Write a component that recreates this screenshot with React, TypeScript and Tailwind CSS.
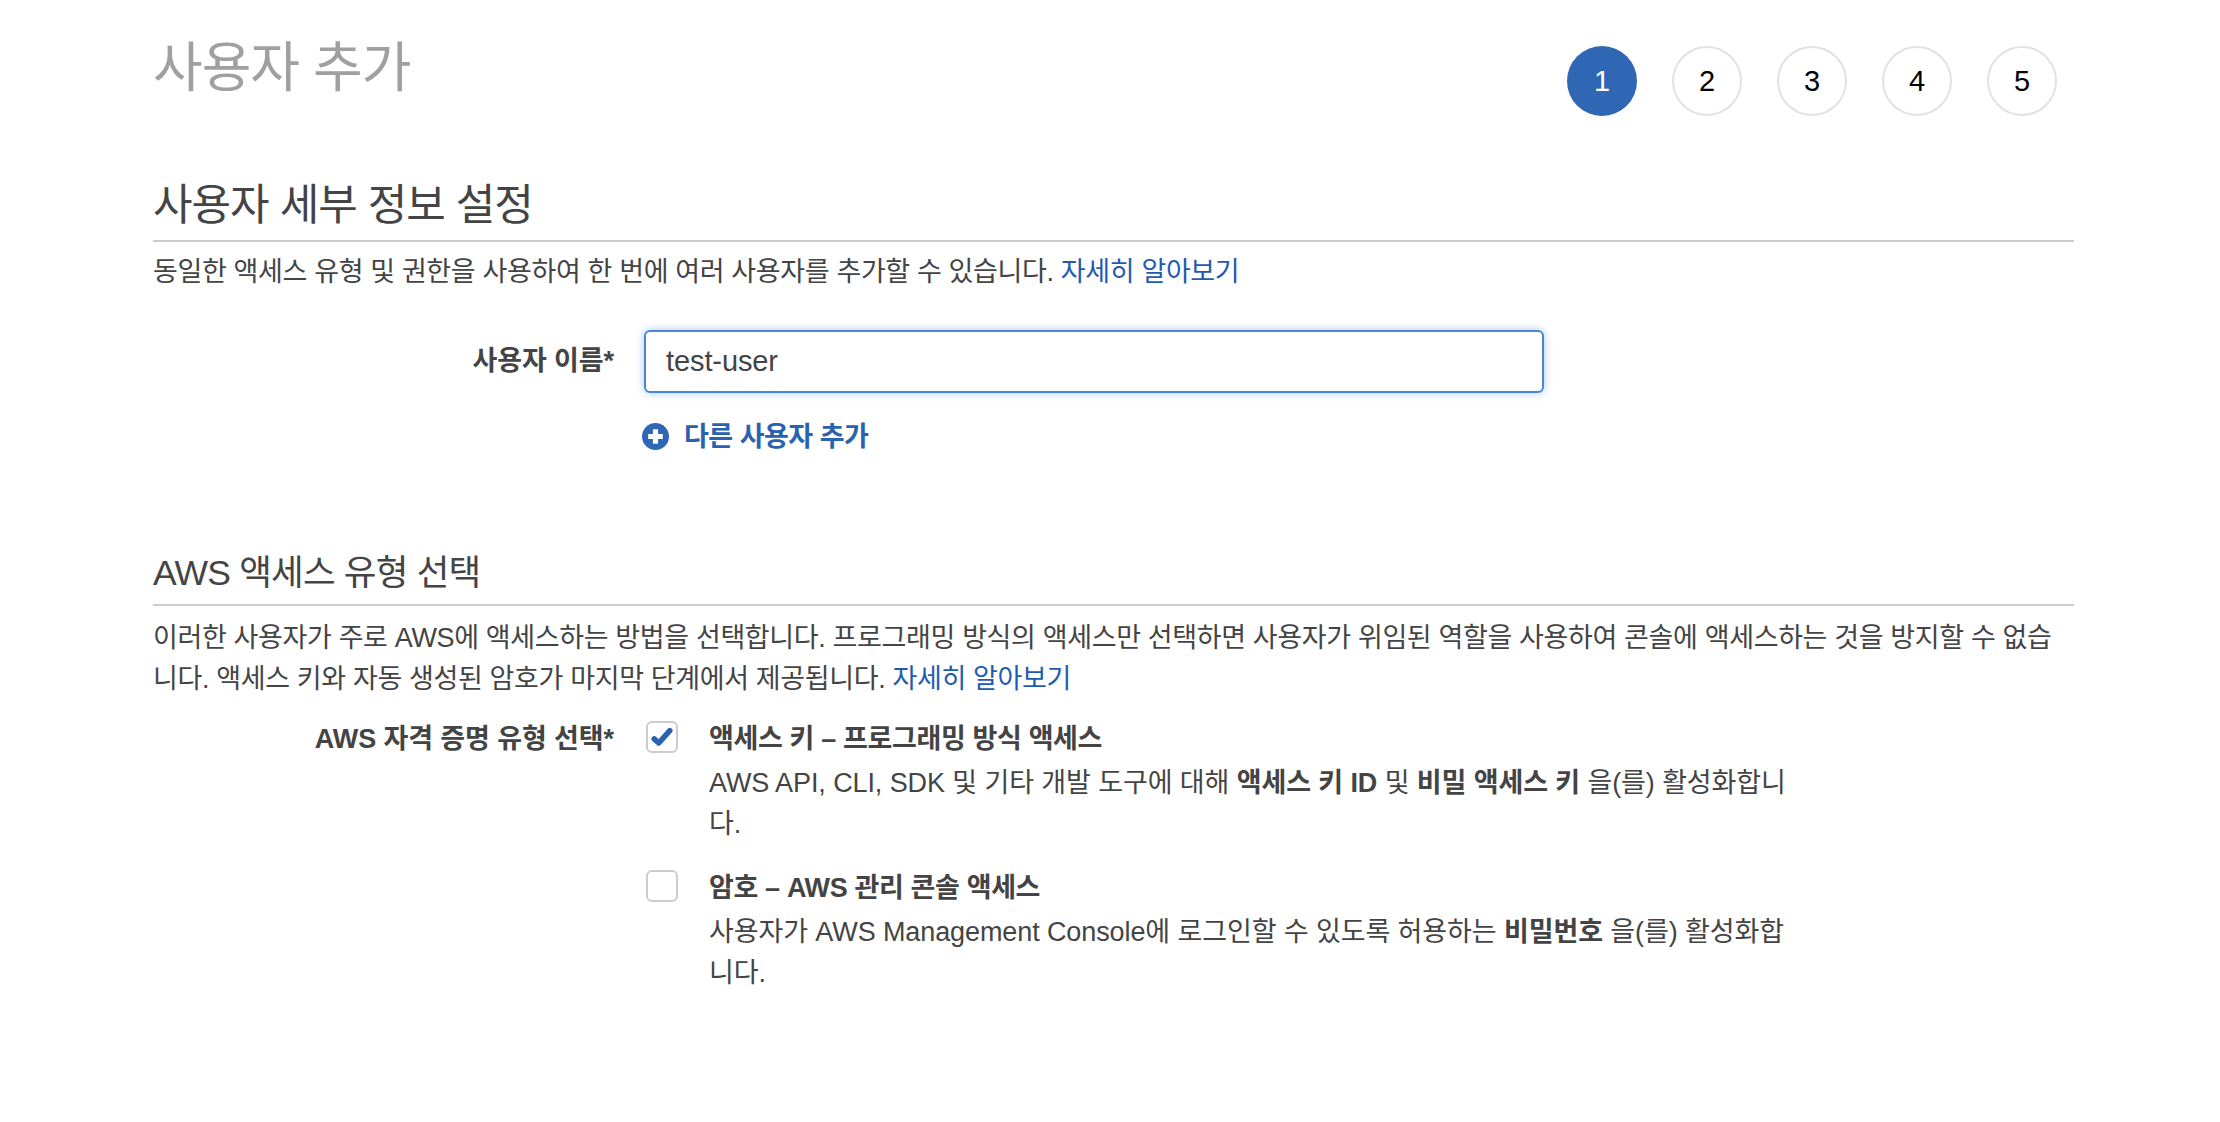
const KR = "font-['Liberation_Sans','Noto_Sans_CJK_KR',sans-serif]";

function Step({ n, active }: { n: number; active?: boolean }) {
  return (
    <div
      className={
        active
          ? "flex h-[70px] w-[70px] items-center justify-center rounded-full bg-[#3067b5] text-[29px] text-white"
          : "flex h-[70px] w-[70px] items-center justify-center rounded-full border-2 border-[#e2e2e2] bg-white text-[29px] text-black"
      }
    >
      {n}
    </div>
  );
}

function Link({ children }: { children: React.ReactNode }) {
  return <span className="text-[#1f5bb0]">{children}</span>;
}

export default function App() {
  return (
    <div className={`${KR} min-h-[1122px] bg-white pl-[153px] pr-[146px] text-[27px] leading-[41px] tracking-[-0.36px] text-[#444444]`}>
      <header className="flex items-start justify-between pt-[32px]">
        <h1 className="text-[54px] leading-[72px] tracking-[-1px] text-[#a0a0a0]">사용자 추가</h1>
        <div className="mr-[17px] mt-[14px] flex gap-[35px] tracking-normal">
          <Step n={1} active />
          <Step n={2} />
          <Step n={3} />
          <Step n={4} />
          <Step n={5} />
        </div>
      </header>

      <h2 className="mt-[63px] border-b-2 border-[#cccccc] pb-[8px] text-[43px] leading-[53px] tracking-[-1px]">사용자 세부 정보 설정</h2>
      <p className="mt-[10px]">
        동일한 액세스 유형 및 권한을 사용하여 한 번에 여러 사용자를 추가할 수 있습니다. <Link>자세히 알아보기</Link>
      </p>

      <div className="mt-[37px] flex items-center">
        <label className="w-[461px] text-right font-bold tracking-[-0.1px]">사용자 이름*</label>
        <input
          readOnly
          value="test-user"
          className="ml-[30px] h-[63px] w-[900px] rounded-[6px] border-2 border-[#4a86d8] bg-white px-[20px] text-[29px] tracking-[-0.1px] text-[#444444] shadow-[0_0_8px_rgba(74,134,216,0.45)] outline-none"
        />
      </div>

      <div className="ml-[489px] mt-[24px] flex items-center font-bold text-[#2a62b0]">
        <svg viewBox="0 0 24 24" className="-mt-[2px] h-[27px] w-[27px]" aria-hidden="true">
          <circle cx="12" cy="12" r="12" fill="#3067b5" />
          <path d="M12 5.5v13M5.5 12h13" stroke="#fff" strokeWidth="4.6" />
        </svg>
        <span className="ml-[15px] text-[27px] tracking-[-0.5px]">다른 사용자 추가</span>
      </div>

      <h3 className="mt-[92px] border-b-2 border-[#cccccc] pb-[7px] text-[35.5px] leading-[47px] tracking-[-0.8px]">AWS 액세스 유형 선택</h3>
      <p className="mt-[12px]">
        이러한 사용자가 주로 AWS에 액세스하는 방법을 선택합니다. 프로그래밍 방식의 액세스만 선택하면 사용자가 위임된 역할을 사용하여 콘솔에 액세스하는 것을 방지할 수 없습니다. 액세스 키와 자동 생성된 암호가 마지막 단계에서 제공됩니다. <Link>자세히 알아보기</Link>
      </p>

      <div className="mt-[19px] flex">
        <div className="w-[461px] text-right font-bold tracking-[-0.1px]">AWS 자격 증명 유형 선택*</div>
        <div className="ml-[32px] flex flex-col gap-[23px]">
          <div className="flex">
            <div className="mt-[2px] flex h-[32px] w-[32px] shrink-0 items-center justify-center rounded-[6px] border-2 border-[#cccccc] bg-white">
              <svg viewBox="0 0 24 24" className="h-[22px] w-[22px]" aria-hidden="true">
                <path d="M3.5 14l5 4.5L20.5 5" fill="none" stroke="#2a62b0" strokeWidth="6" strokeLinecap="round" strokeLinejoin="round" />
              </svg>
            </div>
            <div className="ml-[31px] w-[1085px]">
              <div className="font-bold">액세스 키 – 프로그래밍 방식 액세스</div>
              <div className="mt-[3px] tracking-[-0.1px]">
                AWS API, CLI, SDK 및 기타 개발 도구에 대해 <b>액세스 키 ID</b> 및 <b>비밀 액세스 키</b> 을(를) 활성화합니다.
              </div>
            </div>
          </div>
          <div className="flex">
            <div className="mt-[2px] h-[32px] w-[32px] shrink-0 rounded-[6px] border-2 border-[#cccccc] bg-white" />
            <div className="ml-[31px] w-[1085px]">
              <div className="font-bold">암호 – AWS 관리 콘솔 액세스</div>
              <div className="mt-[3px] tracking-[-0.1px]">
                사용자가 AWS Management Console에 로그인할 수 있도록 허용하는 <b>비밀번호</b> 을(를) 활성화합니다.
              </div>
            </div>
          </div>
        </div>
      </div>
    </div>
  );
}
